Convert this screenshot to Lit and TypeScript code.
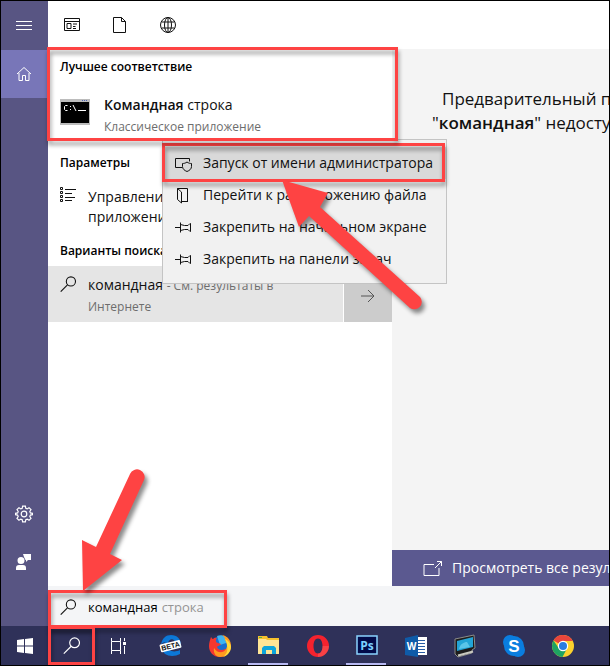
import { LitElement, html, svg, css } from "lit";
import { customElement } from "lit/decorators.js";

const glass = svg`<circle cx="15" cy="7.500" r="6.300"/><path d="M10.600 12 1 21.500"/>`;
const pin = svg`<path d="M0 8.500h5.500M5.500 3.500v10M5.500 5.500l4 1h3.500l2-2h.5v8h-.5l-2-2h-3.500l-4 1"/>`;

const menuItems = [
  {
    label: "Запуск от имени администратора",
    icon: svg`<path d="M7 12.500H.5v-9h14v3"/><path d="M12 7c-1.500 1.200-3 1.500-4.500 1.500v3c0 2.500 2 4 4.500 5 2.500-1 4.500-2.500 4.500-5v-3C15 8.500 13.500 8.200 12 7z"/>`,
  },
  {
    label: "Перейти к расположению файла",
    icon: svg`<path d="M2.500 1.500h10v13h-6M2.500 1.500v11l4 3.500V5zM12.500 9v6"/>`,
  },
  { label: "Закрепить на начальном экране", icon: pin },
  { label: "Закрепить на панели задач", icon: pin },
];

const tasks = [
  {
    name: "Edge Beta",
    open: false,
    art: svg`<path fill="#0c78d8" d="M2 11C3 4 7 1 12 1c6 0 10 4 10 10v2H9c0 4 6 6 12 3v4C14 24 3 22 3 14c0-3 2-5 4-6-2 0-4 1-5 3zM9 9h7c0-5-6-5-7 0z"/>
      <g transform="rotate(-14 12 12)"><rect x="1" y="8" width="21" height="8" rx="1" fill="#fff"/><text x="11.500" y="14.500" text-anchor="middle" font-family="Liberation Sans" font-size="7" font-weight="700" fill="#111">BETA</text></g>`,
  },
  {
    name: "Firefox",
    open: false,
    art: svg`<circle cx="12" cy="12.500" r="10" fill="#1b6fd0"/><path fill="#3fb4f0" d="M9 2c5-2 11 1 12 6l-9 3z"/>
      <path fill="#f6372f" d="M3 3c1 1 1 2 2 2 2-2 3-1 4-1C7 6 8 9 10 9l3 1c-1 2-4 2-4 3 1 3 5 4 8 2l4 2c-2 4-5 6-9 6C5 23 1 18 1 12c0-3 1-6 2-9z"/>
      <path fill="#ff9a1f" d="M6 14c3 5 9 6 12 1 2-3 1-6-1-9 0-2-1-4-3-5 6 1 9 6 9 11 0 6-5 11-11 11-4 0-7-4-6-9z"/><path fill="#ffd93b" d="M17 5c3 1 6 5 6 8 0 5-4 9-8 10 4-3 5-7 4-11 0-3-1-5-2-7z"/>`,
  },
  {
    name: "Проводник",
    open: true,
    art: svg`<path fill="#ffe596" d="M1 4h21v16H1z"/><path fill="#f6c12d" d="M1 2h9l1 2h11v2H10L9 5H1z"/><path fill="#4caf50" d="M2 3h3v1H2z"/><path fill="#0ea5dc" d="M5 20v-6l2-2h10l2 2v6h-4v-4H9v4z"/>`,
  },
  {
    name: "Opera",
    open: false,
    art: svg`<path fill="#f5222e" fill-rule="evenodd" d="M12 1a11 11 0 1 0 0 22 11 11 0 0 0 0-22zm0 3.500c3 0 4.500 3.500 4.500 7.500s-1.500 7.500-4.500 7.500S7.500 16 7.500 12 9 4.500 12 4.500z"/><path fill="#ff7a70" d="M12 19.500c3 0 4.500-3.500 4.500-7.500H23c0 6-5 11-11 11z" opacity=".35"/>`,
  },
  {
    name: "Photoshop",
    open: true,
    art: svg`<rect x="2" y="2" width="20" height="18" fill="#020b4a" stroke="#8ad4ff" stroke-width="1.500"/><text x="12" y="15.500" text-anchor="middle" font-family="Open Sans" font-size="12" font-weight="700" fill="#7cd0ff">Ps</text>`,
  },
  {
    name: "Word",
    open: false,
    art: svg`<path fill="#fff" d="M12 3h11v18H12z"/><path stroke="#285ca5" d="M14 6.500h7M14 9.500h7M14 12.500h7M14 15.500h7M14 18.500h7"/><path fill="#0f5ba8" d="M1 4l13-3v22L1 21z"/><text x="7.500" y="16" text-anchor="middle" font-family="Open Sans" font-size="10" font-weight="700" fill="#fff">W</text>`,
  },
  {
    name: "Компьютер",
    open: false,
    art: svg`<path fill="#1d1d1d" stroke="#8c8c88" d="M2 5 21 1l1 13-3 2v3L5 23l-3-3z"/><path fill="#23a4d6" d="M4 7l16-4v10L4 17z"/><path fill="#7fdcf5" d="M6 15c1-5 5-7 8-7l3 5z" opacity=".6"/><path stroke="#c9c9c0" stroke-width="2" fill="none" d="M5 21.500 20 17.500"/>`,
  },
  {
    name: "Skype",
    open: false,
    art: svg`<circle cx="8" cy="8" r="7" fill="#0a7ee0"/><circle cx="16" cy="16" r="7" fill="#0a7ee0"/><circle cx="12" cy="12" r="10" fill="#0a7ee0"/><text x="12" y="18" text-anchor="middle" font-family="Liberation Sans" font-size="17" font-weight="700" fill="#fff">S</text>`,
  },
  {
    name: "Chrome",
    open: false,
    art: svg`<circle cx="12" cy="12" r="11" fill="#fcd12d"/><path fill="#e8453c" d="M12 12 2.500 6.500A11 11 0 0 1 21.800 7H12z"/><path fill="#1ea362" d="M2.500 6.500A11 11 0 0 0 11.500 23L16 14.500 12 17l-4-2.500z"/><circle cx="12" cy="12" r="5.200" fill="#fff"/><circle cx="12" cy="12" r="4" fill="#2a7de1"/>`,
  },
];

@customElement("app-root")
export class AppRoot extends LitElement {
  static styles = css`
    :host {
      display: block;
      font-family: "Open Sans", "Noto Sans", sans-serif;
      font-size: 14px;
      line-height: 20px;
      color: #111;
      --accent: #585583;
      --red: #fe4343;
    }
    * { box-sizing: border-box; }
    button, input {
      font: inherit;
      color: inherit;
      background: none;
      border: 0;
      padding: 0;
      margin: 0;
      text-align: left;
    }
    svg { display: block; fill: none; stroke: currentColor; flex: none; }
    b { font-weight: 600; }
    p, h2 { margin: 0; }
    .screen {
      min-height: 100vh;
      border: 1px solid #000;
      display: flex;
      flex-direction: column;
      overflow: hidden;
      background: #fff;
    }
    .upper { flex: 1; display: flex; min-width: 0; }
    .rail {
      width: 47px;
      flex: none;
      background: var(--accent);
      color: #fff;
      display: flex;
      flex-direction: column;
      padding-top: 1px;
    }
    .rail button { height: 48px; display: grid; place-items: center; padding-right: 1px; }
    .rail .home { background: #7876b8; }
    .rail .gap { flex: 1; }
    .rail .people { margin-bottom: 40px; }
    .main { flex: 1; min-width: 0; display: flex; flex-direction: column; }
    .filters { height: 48px; display: flex; align-items: center; padding-left: 12px; gap: 24px; }
    .filters button { width: 24px; height: 24px; display: grid; place-items: center; }
    .body { flex: 1; display: flex; min-width: 0; }
    .results { width: 344px; flex: none; position: relative; }
    .marked { position: relative; }
    .marked::after {
      content: "";
      position: absolute;
      inset: 0;
      border: 3px solid var(--red);
      filter: drop-shadow(1px 4px 2px rgba(0, 0, 0, 0.4));
      pointer-events: none;
      z-index: 3;
    }
    h2 { font-size: 12px; font-weight: 600; line-height: 20px; padding-left: 12px; color: #000; }
    .best { height: 92px; padding-top: 8px; }
    .best::after { right: -6px; left: -1px; top: -2px; }
    .best-row { display: flex; padding: 18px 0 0 12px; gap: 14px; width: 100%; }
    .best-row svg { margin-top: 4px; }
    .names { display: flex; flex-direction: column; }
    small { font-size: 12px; line-height: 20px; color: #6d6d6d; }
    .names small { line-height: 24px; }
    .params { padding-top: 12px; }
    .row { display: flex; padding: 0 12px; gap: 12px; }
    .setting { padding-top: 14px; white-space: nowrap; }
    .variants { padding-top: 14px; }
    .web { display: flex; margin-top: 5px; gap: 1px; }
    .web .row { flex: 1; height: 56px; background: #e5e5e5; padding-top: 9px; }
    .web .go { width: 48px; background: #ccc; display: grid; place-items: center; padding-top: 4px; color: #555; }
    .menu {
      position: absolute;
      left: 114px;
      top: 90px;
      width: 285px;
      height: 145px;
      border: 1px solid #c4c4c4;
      background: #f1f1f1;
      padding-top: 7px;
      z-index: 2;
    }
    .menu button {
      width: 100%;
      height: 32px;
      display: flex;
      align-items: center;
      padding-left: 12px;
      gap: 11px;
      white-space: nowrap;
    }
    .menu .first { background: #d9d9d9; }
    .menu .first::after { inset: -4px 1px -3px -1px; }
    .arrow-menu { position: absolute; left: 110px; top: 37px; z-index: 4; }
    .arrow-field { position: absolute; left: 29px; bottom: 28px; z-index: 4; }
    .shape {
      fill: var(--red);
      stroke: none;
      filter: drop-shadow(3px 4px 2px rgba(0, 0, 0, 0.45));
    }
    .preview {
      flex: 1;
      min-width: 0;
      background: #f4f4f4;
      display: flex;
      flex-direction: column;
      justify-content: space-between;
      white-space: nowrap;
      overflow: hidden;
    }
    .preview p { font-size: 17px; line-height: 24px; padding: 38px 0 0 40px; }
    .preview .indent { padding-left: 10px; }
    .all {
      height: 36px;
      background: #5b5990;
      color: #fff;
      display: flex;
      align-items: center;
      gap: 9px;
      padding-left: 31px;
      text-decoration: none;
    }
    .search { height: 40px; background: #f4f5f7; position: relative; }
    .field {
      width: 179px;
      height: 38px;
      top: 4px;
      padding: 0 12px 4px;
      display: flex;
      align-items: center;
      font-size: 13px;
    }
    .field svg { margin-right: 12px; }
    .field input { field-sizing: content; outline: 0; color: #000; }
    .field span { color: #949494; padding-left: 4px; }
    .taskbar { height: 39px; display: flex; background: #2f3159; color: #fff; }
    .taskbar button { width: 47px; display: grid; place-items: center; }
    .taskbar .app { width: 49px; position: relative; }
    .taskbar .app:nth-child(4) { margin-left: 4px; }
    .taskbar .open::after {
      content: "";
      position: absolute;
      inset: auto 5px 0 4px;
      height: 2px;
      background: #b7b9f2;
    }
    .taskbar .app svg { stroke: none; }
  `;

  render() {
    return html`<div class="screen">
      <div class="upper">
        <nav class="rail">
          <button aria-label="Меню"><svg width="16" height="12"><path d="M0 1.500h16M0 5.500h16M0 9.500h16"/></svg></button>
          <button class="home" aria-label="Главная"><svg width="16" height="16"><path d="M1 8 8 1.500 15 8M3 7v7.500h3.500v-5h3v5H13V7"/></svg></button>
          <div class="gap"></div>
          <button aria-label="Параметры"><svg width="18" height="18" stroke-width="1.200"><circle cx="9" cy="9" r="2.800"/><path d="m7.600 1.200 2.800 0 .4 2.100 1.400.6 1.800-1.200 2 2-1.200 1.800.6 1.400 2.100.4v1.400l-2.100.4-.6 1.400 1.200 1.800-2 2-1.800-1.200-1.400.6-.4 2.100H7.600l-.4-2.100-1.400-.6L4 15.300l-2-2 1.200-1.800-.6-1.400L.5 9.700V8.300l2.100-.4.6-1.400L2 4.700l2-2 1.800 1.200 1.400-.6z"/></svg></button>
          <button class="people" aria-label="Отзыв"><svg width="16" height="18"><path fill="currentColor" stroke="none" d="M5 4a3.500 3.500 0 1 1 0 7 3.500 3.500 0 0 1 0-7zM0 17v-2c0-2 1-3 3-3h4c2 0 3 1 3 3v2zM7 1h8v6h-3l-2 2V7H9.500L8 4z"/></svg></button>
        </nav>
        <div class="main">
          <div class="filters">
            <button aria-label="Приложения"><svg width="16" height="14"><path d="M.5.5h15v12H.5zM.5 3.500h15M3 5.500h4v5H3zM9 6h4M9 8.500h2.500M9 10.500h3"/></svg></button>
            <button aria-label="Документы"><svg width="14" height="16"><path d="M.5.5h8l4 4v11H.5zM8.500.5v4h4"/></svg></button>
            <button aria-label="Интернет"><svg width="16" height="16"><circle cx="8" cy="8" r="7.500"/><ellipse cx="8" cy="8" rx="3.500" ry="7.500"/><path d="M1.500 5h13M1.500 11h13M8 .5v15"/></svg></button>
          </div>
          <div class="body">
            <section class="results">
              <div class="best marked">
                <h2>Лучшее соответствие</h2>
                <button class="best-row">
                  <svg width="30" height="26"><path fill="#bcbcbc" stroke="none" d="M0 0h30v26H0z"/><path fill="#000" stroke="none" d="M1 3h28v21H1z"/><path stroke="#4b63b5" stroke-width="1" d="M22 1.500h6" stroke-dasharray="1 1"/><path stroke="#fff" d="M7.500 6.500h-2l-1 1v3l1 1h2M10.500 7v1M10.500 10v1M13 6l3 6M18 11.500h8"/></svg>
                  <span class="names"><span><b>Командная</b> строка</span><small>Классическое приложение</small></span>
                </button>
              </div>
              <h2 class="params">Параметры</h2>
              <button class="row setting">
                <svg width="16" height="16"><path d="M.5.5h2v2h-2zM.5 4.500h2v2h-2zM.5 8.500h2v2h-2zM.5 12.500h2v2h-2zM5 2.500h11M5 6.500h7M5 10.500h10M5 13.500h7"/></svg>
                <span>Управление<br />приложениями</span>
              </button>
              <h2 class="variants">Варианты поиска</h2>
              <div class="web">
                <button class="row">
                  <svg width="16" height="18" viewBox="0 0 22 22" stroke-width="1.500">${glass}</svg>
                  <span>командная <small>- См. результаты в</small><br /><small>Интернете</small></span>
                </button>
                <button class="go" aria-label="Открыть"><svg width="14" height="14"><path d="M0 7h13M7 1l6 6-6 6"/></svg></button>
              </div>
              <div class="menu" role="menu">
                ${menuItems.map(
                  (item, i) => html`<button role="menuitem" class=${i === 0 ? "first marked" : ""}>
                    <svg width="17" height="17">${item.icon}</svg>${item.label}
                  </button>`
                )}
                <svg class="arrow-menu" width="170" height="150"><path class="shape" d="M9 3 55 16 47 30 147 120A7.500 7.500 0 0 1 137 131L36 39 26 50z"/></svg>
              </div>
            </section>
            <section class="preview">
              <p><span class="indent">Предварительный п</span><br />"<b>командная</b>" недосту</p>
              <a class="all" href="#"><svg width="20" height="17"><path d="M11 4.500H1v11h15V8M12 8l6.500-6.500M14 1.500h4.500V6"/></svg>Просмотреть все резул</a>
            </section>
          </div>
          <div class="search">
            <label class="field marked">
              <svg width="16" height="18" viewBox="0 0 22 22" stroke-width="1.500">${glass}</svg>
              <input type="text" aria-label="Поиск" .value=${"командная"} /><span>строка</span>
            </label>
            <svg class="arrow-field" width="80" height="140"><path class="shape" d="M6 133 5 82 19 89 53 16A7.500 7.500 0 0 1 67 22L33 96 45 102z"/></svg>
          </div>
        </div>
      </div>
      <div class="taskbar">
        <button aria-label="Пуск"><svg width="16" height="16"><path fill="currentColor" stroke="none" d="M0 2l7-1v6.500H0zM8 1l8-1v7.500H8zM0 8.500h7V15l-7-1zM8 8.500h8V16l-8-1z"/></svg></button>
        <button class="marked" aria-label="Поиск"><svg width="17" height="17" viewBox="0 0 22 22" stroke-width="1.500">${glass}</svg></button>
        <button aria-label="Представление задач"><svg width="17" height="16"><path d="M1.500 0v3.500h9V0M1.500 16v-3.500h9V16M1.500 3.500v9M10.500 3.500v9M14.500 0v3M14.500 8v8"/><path fill="currentColor" stroke="none" d="M13 4h3v3h-3z"/></svg></button>
        ${tasks.map(
          (t) => html`<button class="app ${t.open ? "open" : ""}" aria-label=${t.name}><svg width="24" height="24">${t.art}</svg></button>`
        )}
      </div>
    </div>`;
  }
}
